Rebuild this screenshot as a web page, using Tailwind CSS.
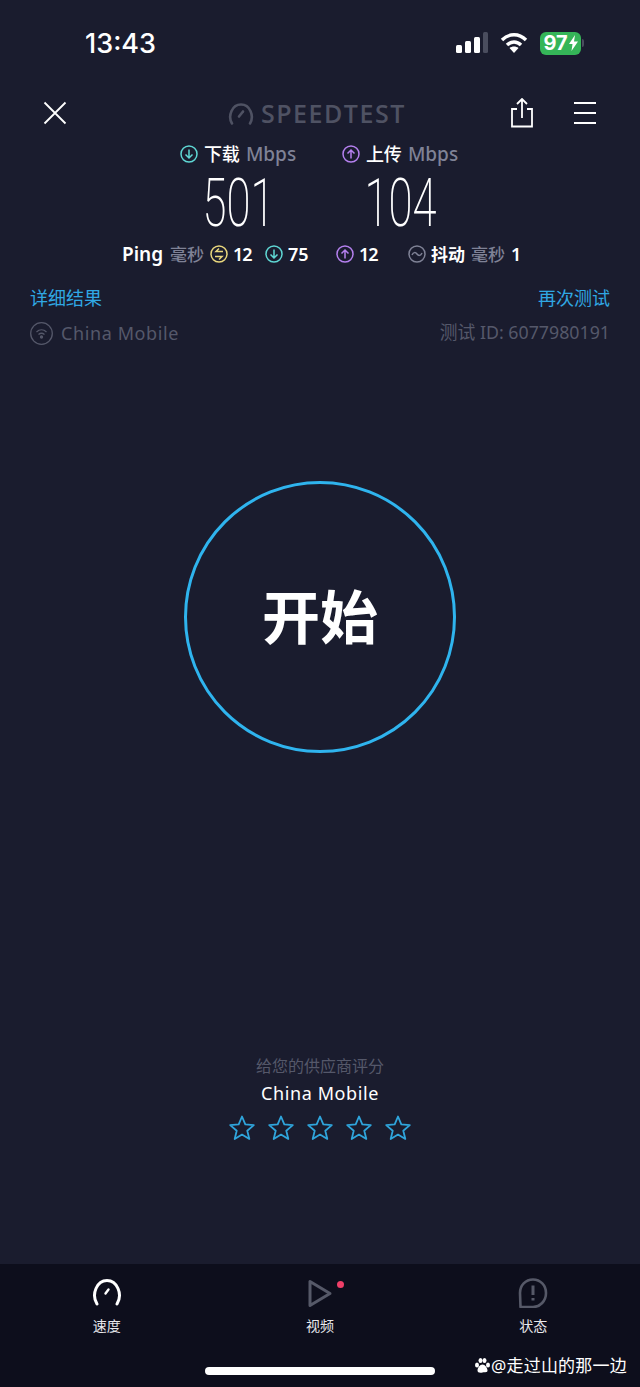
<!DOCTYPE html>
<html lang="zh-CN">
<head>
    <meta charset="UTF-8">
    <meta name="viewport" content="width=device-width, initial-scale=1.0">
    <title>Speedtest</title>
    <script src="https://cdn.jsdelivr.net/npm/@tailwindcss/browser@4"></script>
</head>
<body class="bg-[#1a1c2e] font-['Noto_Sans','Noto_Sans_CJK_SC',sans-serif]">
<div class="relative w-[640px] h-[1387px] overflow-hidden flex flex-col">

    <!-- Status bar -->
    <div class="h-[86px] flex items-center justify-between pl-[85px] pr-[56px] shrink-0">
        <span class="mt-[2px] text-[27px] font-medium text-white font-['Inter',sans-serif]">13:43</span>
        <div class="flex items-center">
            <svg width="32" height="22" viewBox="0 0 32 22" class="text-white">
                <rect x="0" y="13" width="6" height="8" rx="1.500" fill="currentColor"/>
                <rect x="9" y="9" width="6" height="12" rx="1.500" fill="currentColor"/>
                <rect x="18" y="5" width="6" height="16" rx="1.500" fill="currentColor"/>
                <rect x="27" y="0" width="5" height="21" rx="1.500" fill="#4a4d5e"/>
            </svg>
            <svg width="28" height="22" viewBox="0 0 28 22" class="ml-[12px]" fill="none" stroke="white" stroke-width="3.400">
                <path d="M2 8c7-7 17-7 24 0"/>
                <path d="M7 13c4-4 10-4 14 0"/>
                <path d="M9.500 16L14 21l4.500-5c-2.500-2-6.500-2-9 0z" fill="white" stroke="none"/>
            </svg>
            <div class="ml-[12px] w-[41px] h-[23px] rounded-[6px] bg-[#35b558] flex items-center justify-center text-white text-[20px] font-bold leading-none font-['Inter',sans-serif]">
                97<svg width="9" height="16" viewBox="0 0 9 16" class="ml-[1px]"><path d="M6 0L0 9h3.500L2.500 16 9 6.500H5z" fill="white"/></svg>
            </div>
            <div class="ml-[1px] w-[2px] h-[8px] bg-[#4a4d5e] rounded-r"></div>
        </div>
    </div>

    <!-- Header -->
    <div class="h-[54px] flex items-center justify-between pl-[43px] pr-[44px] shrink-0 relative">
        <svg width="24" height="24" viewBox="0 0 24 24" fill="none" stroke="white" stroke-width="1.800"><path d="M1.500 1.500l21 21M22.500 1.500l-21 21"/></svg>
        <div class="absolute left-[228px] top-[15px] flex items-center">
            <svg width="26" height="24" viewBox="0 0 26 24" fill="none" stroke="#4f5263" stroke-width="2.600" stroke-linecap="round"><path d="M4 21.500C-0.500 14 4 2.500 13 2.500s13.500 11.500 9 19"/><path d="M11 14.500l4-5"/></svg>
            <span class="ml-[7px] text-[25px] leading-none font-semibold text-[#4f5263] font-['Open_Sans',sans-serif] tracking-[1.500px]">SPEEDTEST</span>
        </div>
        <div class="flex items-center gap-[41px]">
            <svg width="22" height="30" viewBox="0 0 22 30" fill="none" stroke="white" stroke-width="1.800"><path d="M11 20V1.500M6 6l5-5 5 5"/><path d="M6 11H1v17.500h20V11h-5"/></svg>
            <div class="w-[22px] flex flex-col gap-[8px]">
                <div class="h-[2px] bg-white"></div>
                <div class="h-[2px] bg-white"></div>
                <div class="h-[2px] bg-white"></div>
            </div>
        </div>
    </div>

    <!-- Speed results -->
    <div class="ml-[157px] w-[324px] grid grid-cols-2 mt-[2px] shrink-0">
        <div class="flex flex-col items-center">
            <div class="h-[24px] flex items-center gap-[6px] text-[19px] font-medium leading-none">
                <svg width="18" height="18" viewBox="0 0 18 18" fill="none" stroke="#5fd7d4" stroke-width="1.500"><circle cx="9" cy="9" r="8"/><path d="M9 4.500v8.500M5.500 9.500L9 13l3.500-3.500"/></svg>
                <span class="text-white text-[18px]">下载</span>
                <span class="text-[#7f8296]">Mbps</span>
            </div>
            <div class="h-[66px] mt-[5px] flex items-center justify-center text-white text-[66px] font-extralight leading-none font-['Roboto',sans-serif] scale-x-[0.66]">501</div>
        </div>
        <div class="flex flex-col items-center">
            <div class="h-[24px] flex items-center gap-[6px] text-[19px] font-medium leading-none">
                <svg width="18" height="18" viewBox="0 0 18 18" fill="none" stroke="#b580ef" stroke-width="1.500"><circle cx="9" cy="9" r="8"/><path d="M9 13.500V5M5.500 8.500L9 5l3.500 3.500"/></svg>
                <span class="text-white text-[18px]">上传</span>
                <span class="text-[#7f8296]">Mbps</span>
            </div>
            <div class="h-[66px] mt-[5px] flex items-center justify-center text-white text-[66px] font-extralight leading-none font-['Roboto',sans-serif] scale-x-[0.66]">104</div>
        </div>
    </div>

    <!-- Ping row -->
    <div class="mt-[5px] h-[24px] pl-[122px] flex items-center text-[18px] leading-none font-semibold text-white shrink-0">
        <span class="w-[42px] text-[19px]">Ping</span>
        <span class="ml-[6px] w-[34px] text-[#7f8296] font-medium text-[17px]">毫秒</span>
        <svg width="18" height="18" viewBox="0 0 18 18" fill="none" stroke="#e9d77d" stroke-width="1.500" class="ml-[6px]"><circle cx="9" cy="9" r="8"/><path d="M13 6.500H6l3-3M5 11.500h7l-3 3"/></svg>
        <span class="ml-[5px] w-[18px] tracking-[-1px]">12</span>
        <svg width="18" height="18" viewBox="0 0 18 18" fill="none" stroke="#5fd7d4" stroke-width="1.500" class="ml-[14px]"><circle cx="9" cy="9" r="8"/><path d="M9 4.500v8.500M5.500 9.500L9 13l3.500-3.500"/></svg>
        <span class="ml-[5px] w-[22px]">75</span>
        <svg width="18" height="18" viewBox="0 0 18 18" fill="none" stroke="#b580ef" stroke-width="1.500" class="ml-[26px]"><circle cx="9" cy="9" r="8"/><path d="M9 13.500V5M5.500 8.500L9 5l3.500 3.500"/></svg>
        <span class="ml-[5px] w-[18px] tracking-[-1px]">12</span>
        <svg width="18" height="18" viewBox="0 0 18 18" fill="none" stroke="#7f8296" stroke-width="1.500" class="ml-[31px]"><circle cx="9" cy="9" r="8"/><path d="M4 10c1.500-3 3.500-3 5-1s3.500 2 5-1"/></svg>
        <span class="ml-[5px] w-[35px] text-[17px]">抖动</span>
        <span class="ml-[5px] w-[35px] text-[#7f8296] font-medium text-[17px]">毫秒</span>
        <span class="ml-[5px]">1</span>
    </div>

    <!-- Links -->
    <div class="mt-[20px] h-[24px] px-[30px] flex items-center justify-between text-[18px] leading-none text-[#30a8e4] shrink-0">
        <span>详细结果</span>
        <span>再次测试</span>
    </div>
    <div class="mt-[11px] h-[24px] px-[30px] flex items-center justify-between text-[18px] leading-none text-[#55586a] shrink-0">
        <div class="flex items-center">
            <svg width="23" height="23" viewBox="0 0 23 23" fill="none" stroke="#55586a" stroke-width="1.300">
                <circle cx="11.500" cy="11.500" r="10.800"/>
                <path d="M6.500 10c3-2.800 7-2.800 10 0M8.500 12.500c1.800-1.500 4.200-1.500 6 0"/>
                <circle cx="11.500" cy="15" r="1" fill="#55586a"/>
            </svg>
            <span class="ml-[8px] tracking-[0.6px]">China Mobile</span>
        </div>
        <span class="text-[17.800px]">测试 ID: 6077980191</span>
    </div>

    <!-- Start button -->
    <div class="mt-[136px] flex justify-center shrink-0">
        <div class="w-[272px] h-[272px] rounded-full border-[3px] border-[#2fb4ee] flex items-center justify-center text-white text-[58px] font-bold leading-none">开始</div>
    </div>

    <!-- Rating -->
    <div class="mt-[301px] flex flex-col items-center shrink-0">
        <div class="h-[24px] flex items-center text-[16px] leading-none text-[#55586a]">给您的供应商评分</div>
        <div class="mt-[3px] h-[24px] flex items-center text-[18px] leading-none text-white tracking-[0.6px]">China Mobile</div>
        <div class="mt-[10px] flex gap-[13px]">
            <svg width="26" height="25" viewBox="0 0 26 25" fill="none" stroke="#2fa5dc" stroke-width="1.800" stroke-linejoin="round"><path d="M13 1.500l3.300 7.900 8.500.7-6.500 5.600 2 8.300L13 19.600l-7.300 4.400 2-8.300-6.500-5.600 8.500-.7z"/></svg>
            <svg width="26" height="25" viewBox="0 0 26 25" fill="none" stroke="#2fa5dc" stroke-width="1.800" stroke-linejoin="round"><path d="M13 1.500l3.300 7.900 8.500.7-6.500 5.600 2 8.300L13 19.600l-7.300 4.400 2-8.300-6.500-5.600 8.500-.7z"/></svg>
            <svg width="26" height="25" viewBox="0 0 26 25" fill="none" stroke="#2fa5dc" stroke-width="1.800" stroke-linejoin="round"><path d="M13 1.500l3.300 7.900 8.500.7-6.500 5.600 2 8.300L13 19.600l-7.300 4.400 2-8.300-6.500-5.600 8.500-.7z"/></svg>
            <svg width="26" height="25" viewBox="0 0 26 25" fill="none" stroke="#2fa5dc" stroke-width="1.800" stroke-linejoin="round"><path d="M13 1.500l3.300 7.900 8.500.7-6.500 5.600 2 8.300L13 19.600l-7.300 4.400 2-8.300-6.500-5.600 8.500-.7z"/></svg>
            <svg width="26" height="25" viewBox="0 0 26 25" fill="none" stroke="#2fa5dc" stroke-width="1.800" stroke-linejoin="round"><path d="M13 1.500l3.300 7.900 8.500.7-6.500 5.600 2 8.300L13 19.600l-7.300 4.400 2-8.300-6.500-5.600 8.500-.7z"/></svg>
        </div>
    </div>

    <!-- Tab bar -->
    <div class="absolute left-0 right-0 bottom-0 h-[123px] bg-[#0d0e1c]">
        <div class="grid grid-cols-3 pt-[14px] w-[640px]">
            <div class="flex flex-col items-center">
                <svg width="30" height="30" viewBox="0 0 30 30" fill="none" stroke="white" stroke-width="3" stroke-linecap="round"><path d="M5 26C-1 16 5 2.500 15 2.500S31 16 25 26"/><path d="M13.500 15.500l3-4" stroke-width="2.400"/></svg>
                <span class="mt-[11px] text-[14px] leading-none text-[#e8e8ec]">速度</span>
            </div>
            <div class="relative flex flex-col items-center">
                <svg width="30" height="30" viewBox="0 0 30 30" fill="none" stroke="#565968" stroke-width="3" stroke-linejoin="round"><path d="M5 3.500v24L25 15.500z"/></svg>
                <span class="mt-[11px] text-[14px] leading-none text-[#e8e8ec]">视频</span>
                <div class="absolute left-[124px] top-[3px] w-[7px] h-[7px] rounded-full bg-[#ef3f68]"></div>
            </div>
            <div class="flex flex-col items-center">
                <svg width="30" height="30" viewBox="0 0 30 30" fill="none" stroke="#565968" stroke-width="2.600" stroke-linejoin="round"><path d="M2 15C2 7.500 7.500 1.500 15 1.500S28 7.500 28 15c0 8-6 14-13 14H2.500z"/><path d="M15 7.500v9.500M15 20v2.500" stroke-width="3"/></svg>
                <span class="mt-[11px] text-[14px] leading-none text-[#e8e8ec]">状态</span>
            </div>
        </div>
        <div class="absolute left-[205px] bottom-[12px] w-[230px] h-[8px] rounded-full bg-white"></div>
        <!-- Watermark -->
        <div class="absolute left-[474px] bottom-[13px] flex items-center text-[17px] leading-none text-white">
            <svg width="17" height="17" viewBox="0 0 17 17" fill="white"><ellipse cx="3" cy="8" rx="2" ry="2.500"/><ellipse cx="6.500" cy="3.500" rx="2" ry="2.500"/><ellipse cx="10.500" cy="3.500" rx="2" ry="2.500"/><ellipse cx="14" cy="8" rx="2" ry="2.500"/><path d="M8.500 7.500c-2.500 0-5 3.500-5 6 0 2 2 2.500 5 2s5 0 5-2c0-2.500-2.500-6-5-6z"/></svg>
            <span class="tracking-[0.2px]">@走过山的那一边</span>
        </div>
    </div>
</div>
</body>
</html>
